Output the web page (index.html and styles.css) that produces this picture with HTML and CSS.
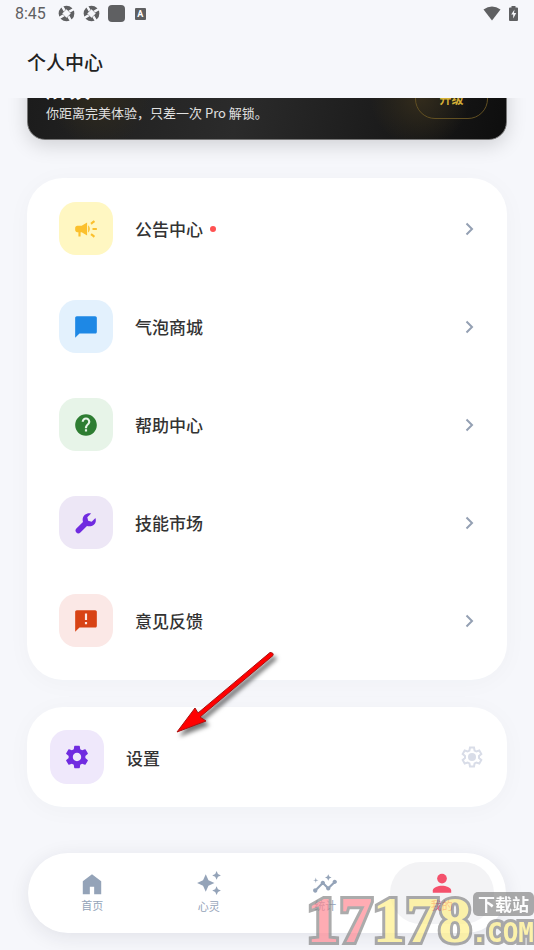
FILE: index.html
```html
<!DOCTYPE html>
<html lang="zh-CN">
<head>
<meta charset="utf-8">
<meta name="viewport" content="width=device-width, initial-scale=1">
<title>个人中心</title>
<link rel="stylesheet" href="styles.css">
</head>
<body>
<div class="status">
  <span class="time">8:45</span>
  <svg width="17" height="17" viewBox="0 0 18 18"><circle cx="9" cy="9" r="8.300"/><path d="M9 4.500L13.500 9 9 13.500 4.500 9zM8 5L5 0 3 1.500 6 7zM13 8l5-3-1.500-2L11 6zM10 13l3 5 2-1.500L12 11zM5 10l-5 3 1.500 2L7 12z" fill="#f6f7fb"/></svg>
  <svg width="17" height="17" viewBox="0 0 18 18"><circle cx="9" cy="9" r="8.300"/><path d="M9 4.500L13.500 9 9 13.500 4.500 9zM8 5L5 0 3 1.500 6 7zM13 8l5-3-1.500-2L11 6zM10 13l3 5 2-1.500L12 11zM5 10l-5 3 1.500 2L7 12z" fill="#f6f7fb"/></svg>
  <span class="square"></span>
  <span class="badge-a">A</span>
  <svg class="wifi" width="18" height="15" viewBox="0 0 18 15"><path d="M.5 3.4Q9-2.4 17.500 3.400L9 14.500z"/></svg>
  <svg width="9" height="15" viewBox="0 0 9 15"><path d="M2.500 0h4v1.500H8q1 0 1 1V14q0 1-1 1H1q-1 0-1-1V2.500q0-1 1-1h1.500z"/><path d="M5.500 3.500L2.200 8.500h2v4l3-5.500H5z" fill="#f6f7fb"/></svg>
</div>
<header class="title"><h1>个人中心</h1></header>
<main>
  <section class="promo-window">
    <div class="promo">
      <div class="promo-text"><h2>解锁 Pro</h2><p>你距离完美体验，只差一次 Pro 解锁。</p></div>
      <button class="upgrade" type="button">升级</button>
    </div>
  </section>
  <nav class="card list">
    <a class="row" href="#notice"><span class="tile yellow"><svg viewBox="0 0 24 24"><path d="M18 11v2h4v-2h-4zm-2 6.610c.96.71 2.210 1.650 3.200 2.390.4-.53.8-1.070 1.200-1.600-.99-.74-2.240-1.680-3.200-2.400-.4.540-.8 1.080-1.200 1.610zM20.400 5.600c-.4-.53-.8-1.070-1.200-1.600-.99.740-2.240 1.680-3.200 2.400.4.530.8 1.070 1.200 1.600.96-.72 2.210-1.650 3.200-2.400zM4 9c-1.100 0-2 .9-2 2v2c0 1.100.9 2 2 2h1v4h2v-4h1l5 3V6L8 9H4zm11.500 3c0-1.330-.58-2.530-1.500-3.350v6.690c.92-.81 1.500-2.010 1.500-3.340z"/></svg></span><span>公告中心</span><i class="dot"></i><svg class="chevron" viewBox="0 0 24 24"><path d="M9.500 6.500L15 12l-5.500 5.500"/></svg></a>
    <a class="row" href="#bubble"><span class="tile blue"><svg viewBox="0 0 24 24"><path d="M20.500 2h-17C2.700 2 2 2.700 2 3.500V22l4-4h14.500c.8 0 1.500-.7 1.500-1.500v-13c0-.8-.7-1.500-1.500-1.500z"/></svg></span><span>气泡商城</span><svg class="chevron" viewBox="0 0 24 24"><path d="M9.500 6.500L15 12l-5.500 5.500"/></svg></a>
    <a class="row" href="#help"><span class="tile green"><svg viewBox="0 0 24 24"><path d="M12 2C6.480 2 2 6.480 2 12s4.480 10 10 10 10-4.480 10-10S17.520 2 12 2zm1 16h-2v-2h2v2zm2.070-6.750l-.9.920C13.450 12.900 13 13.500 13 15h-2v-.5c0-1.100.45-2.100 1.170-2.830l1.240-1.260c.37-.36.59-.86.59-1.410 0-1.100-.9-2-2-2s-2 .9-2 2H8c0-2.210 1.790-4 4-4s4 1.790 4 4c0 .88-.36 1.680-.93 2.250z"/></svg></span><span>帮助中心</span><svg class="chevron" viewBox="0 0 24 24"><path d="M9.500 6.500L15 12l-5.500 5.500"/></svg></a>
    <a class="row" href="#skills"><span class="tile violet"><svg viewBox="0 0 24 24"><path d="M20.700 7.300l-3.500 3.500-3.200-.8-.8-3.200 3.500-3.500C13.700 2.200 9.100 4.200 8.900 8.800c0 .8.1 1.500.3 2.200l-6.100 6.100c-1.100 1.100-1.100 2.700 0 3.700 1 1.100 2.600 1.100 3.700 0l6.100-6.100c4.900 1.500 9.700-2.400 7.800-7.400z"/></svg></span><span>技能市场</span><svg class="chevron" viewBox="0 0 24 24"><path d="M9.500 6.500L15 12l-5.500 5.500"/></svg></a>
    <a class="row" href="#feedback"><span class="tile red"><svg viewBox="0 0 24 24"><path d="M20.500 2h-17C2.700 2 2 2.700 2 3.500V22l4-4h14.500c.8 0 1.500-.7 1.500-1.500v-13c0-.8-.7-1.500-1.500-1.500zM13 15h-2v-2h2v2zm0-4h-2V5h2v6z"/></svg></span><span>意见反馈</span><svg class="chevron" viewBox="0 0 24 24"><path d="M9.500 6.500L15 12l-5.500 5.500"/></svg></a>
  </nav>
  <a class="card settings" href="#settings"><span class="tile purple"><svg viewBox="0 0 24 24"><path d="M19.140 12.940c.04-.3.06-.61.06-.94s-.02-.64-.07-.94l2.030-1.580c.18-.14.23-.41.12-.61l-1.920-3.320c-.12-.22-.37-.29-.59-.22l-2.390.96c-.5-.38-1.030-.7-1.620-.94L14.400 2.810c-.04-.24-.24-.41-.48-.41h-3.840c-.24 0-.43.17-.47.41L9.250 5.350C8.660 5.590 8.120 5.920 7.630 6.290L5.240 5.330c-.22-.08-.47 0-.59.22L2.740 8.870c-.12.21-.08.47.12.61l2.030 1.580c-.05.3-.09.63-.09.94s.02.64.07.94l-2.030 1.580c-.18.14-.23.41-.12.61l1.920 3.320c.12.22.37.29.59.22l2.390-.96c.5.38 1.030.7 1.620.94l.36 2.540c.05.24.24.41.48.41h3.840c.24 0 .44-.17.47-.41l.36-2.540c.59-.24 1.130-.56 1.620-.94l2.390.96c.22.080.47 0 .59-.22l1.920-3.320c.12-.22.070-.47-.12-.61zM12 15.600c-1.980 0-3.600-1.620-3.600-3.600s1.620-3.600 3.600-3.600 3.600 1.620 3.600 3.600-1.620 3.600-3.600 3.600z"/></svg></span><span>设置</span><svg class="gear" viewBox="0 0 24 24"><path class="gear-line" d="M10 2.500h4l.6 3 1.800 1 2.900-1 2 3.500-2.300 2v2l2.300 2-2 3.500-2.900-1-1.800 1-.6 3h-4l-.6-3-1.800-1-2.900 1-2-3.500 2.300-2v-2l-2.300-2 2-3.500 2.900 1 1.800-1z"/><circle cx="12" cy="12" r="4"/></svg></a>
</main>
<nav class="tabs">
  <a href="#home"><svg viewBox="0 0 24 24"><path d="M3.500 21.500v-12L12 3l8.500 6.500v12H14v-7h-4v7z"/></svg><span>首页</span></a>
  <a class="soul" href="#soul"><svg viewBox="0 0 24 24"><path d="M19 9l1.250-2.750L23 5l-2.750-1.250L19 1l-1.250 2.750L15 5l2.750 1.250zM11.500 9.500L9 4 6.500 9.500 1 12l5.500 2.500L9 20l2.500-5.500L17 12zM19 15l-1.250 2.750L15 19l2.750 1.250L19 23l1.250-2.750L23 19l-2.750-1.250z"/></svg><span>心灵</span></a>
  <a href="#stats"><svg viewBox="0 0 24 24"><path d="M21 8c-1.450 0-2.260 1.440-1.930 2.510l-3.550 3.560c-.3-.09-.74-.09-1.040 0l-2.550-2.550C12.270 10.450 11.460 9 10 9c-1.450 0-2.270 1.440-1.930 2.520l-4.560 4.550C2.440 15.740 1 16.550 1 18c0 1.100.9 2 2 2 1.450 0 2.260-1.440 1.930-2.510l4.550-4.560c.3.090.740.090 1.040 0l2.550 2.550C12.730 16.550 13.540 18 15 18c1.450 0 2.270-1.440 1.930-2.520l3.560-3.550C21.560 12.260 23 11.450 23 10c0-1.100-.9-2-2-2zM15 9l.94-2.070L18 6l-2.060-.93L15 3l-.92 2.070L12 6l2.080.93zM3.500 11L4 9l2-.5L4 8l-.5-2L3 8l-2 .5L3 9z"/></svg><span>统计</span></a>
  <a class="active" href="#me"><svg viewBox="0 0 24 24"><circle cx="12" cy="7" r="4.500"/><path d="M3.500 20v-2c0-3 5-4.500 8.500-4.500s8.500 1.500 8.500 4.500v2z"/></svg><span>我的</span></a>
</nav>
<svg class="arrow" viewBox="0 0 110 94" aria-hidden="true"><path d="M98 4.500L26 65l-3-5L5 84l29-11-6-4L101 7.500q1-3-3-3z"/></svg>
<div class="watermark"><span class="num"><b>17</b>178</span><span class="site"><span class="tag">下载站</span><span class="com">.COM</span></span></div>
</body>
</html>
```
FILE: styles.css
```css
* { box-sizing: border-box; }
body {
  margin: 0;
  min-height: 100vh;
  position: relative;
  overflow: hidden;
  background: #f6f7fb;
  color: #333;
  font-family: Roboto, "Noto Sans CJK SC", sans-serif;
}
a { color: inherit; text-decoration: none; }
h1, h2, p { margin: 0; }
svg { display: block; fill: currentColor; flex: none; }
.status { height: 27px; padding: 0 16px 0 15px; display: flex; align-items: center; gap: 8px; color: #5f6062; }
.time { font-size: 16px; margin-right: 4px; }
.square { width: 17px; height: 17px; border-radius: 4px; background: #5f6062; }
.badge-a { width: 11px; height: 12px; margin-left: 2px; border-radius: 1px; background: #5f6062; color: #fff; font: bold 9px/12px Roboto, sans-serif; text-align: center; }
.wifi { margin-left: auto; }
.title { height: 71px; padding: 0 27px 2px; display: flex; align-items: center; }
h1 { font-size: 19px; font-weight: 500; color: #222; }
main { padding: 0 27px; }
.promo-window { margin: 0 -27px; padding: 0 27px; height: 80px; overflow: hidden; display: flex; flex-direction: column; justify-content: flex-end; }
.promo {
  flex: none;
  height: 112px;
  margin-bottom: 38px;
  padding: 0 18px;
  display: flex;
  align-items: flex-end;
  justify-content: space-between;
  border: 1px solid #777;
  border-radius: 18px;
  background: radial-gradient(circle at 82% 62%, #332c1c, transparent 50px), radial-gradient(circle at 15% 62%, #2f2a1d, transparent 50px), linear-gradient(100deg, #1b1b1b, #2b2b2b 45%, #0e0e0e);
  box-shadow: 0 5px 20px #00000028;
}
.promo h2 { font-size: 22px; line-height: 26px; color: #fff; }
.promo p { font: 13px/20px "Noto Sans CJK SC", sans-serif; color: #e0e0e0; margin-bottom: 16px; }
.upgrade { width: 73px; height: 40px; margin-bottom: 20px; padding: 0; border: 1px solid #625022; border-radius: 20px; background: transparent; color: #d4af37; font: bold 12px/18px "Noto Sans CJK SC", sans-serif; }
.card { border-radius: 36px; background: #fff; box-shadow: 0 3px 24px #20304008; }
.list { padding: 24px 28px 33px 32px; display: flex; flex-direction: column; gap: 45px; }
.row, .settings { display: flex; align-items: center; font-size: 17px; font-weight: 500; }
.tile { width: 54px; height: 53px; margin-right: 22px; border-radius: 17px; display: grid; place-items: center; }
.tile svg { width: 26px; height: 26px; }
.yellow { background: #fff7c2; color: #fbc02d; }
.blue { background: #e3f1fd; color: #1e88e5; }
.green { background: #e7f4e8; color: #2e7d32; }
.violet { background: #ede7f6; color: #702be0; }
.red { background: #fbe8e6; color: #d84315; }
.purple { background: #efe8fb; color: #702be0; }
.purple svg { width: 28px; height: 28px; }
.dot { width: 6px; height: 6px; margin-left: 7px; border-radius: 50%; background: #ff5252; }
.chevron { width: 24px; height: 24px; margin-left: auto; margin-right: -2px; color: #94a0b3; }
.chevron path { fill: none; stroke: currentColor; stroke-width: 2; }
.settings { margin-top: 27px; padding: 23px; }
.settings .tile { height: 54px; }
.gear { width: 24px; height: 24px; margin-left: auto; color: #d9dde8; }
.gear-line { fill: none; stroke: currentColor; stroke-width: 2; }
.tabs { height: 80px; margin: 46px 28px 0; padding: 9px 12px; display: grid; grid-template-columns: repeat(4, 1fr); gap: 12px; border-radius: 40px; background: #fff; box-shadow: 0 4px 20px #20203018; color: #94a3b8; }
.tabs a { display: flex; flex-direction: column; align-items: center; justify-content: center; gap: 2px; padding-bottom: 1px; border-radius: 31px; font-size: 11px; line-height: 16px; }
.tabs svg { width: 26px; height: 26px; }
.tabs .soul { gap: 4px; padding-bottom: 0; }
.tabs .active { background: #f3f3f5; color: #f4516c; }
.arrow { position: absolute; left: 172px; top: 648px; width: 110px; height: 94px; fill: #f00; stroke: #a11; stroke-width: 1; filter: drop-shadow(3px 4px 2px #0008); }
.watermark { position: absolute; right: 0; bottom: 0; display: flex; align-items: flex-end; opacity: .7; color: #fff08a; pointer-events: none; }
.num, .com { font-weight: bold; -webkit-text-stroke: 6px #888; paint-order: stroke fill; }
.num { font-family: "Liberation Sans Narrow", "Liberation Serif", serif; font-size: 66px; line-height: 60px; }
.num b { color: #ff8a94; }
.site { display: flex; flex-direction: column; align-items: flex-end; }
.tag { padding: 0 5px; border-radius: 5px; background: #888; color: #fff; font: bold 17px/24px "Noto Sans CJK SC", sans-serif; }
.com { font-family: "DejaVu Sans Mono", monospace; font-size: 26px; line-height: 34px; }
```
